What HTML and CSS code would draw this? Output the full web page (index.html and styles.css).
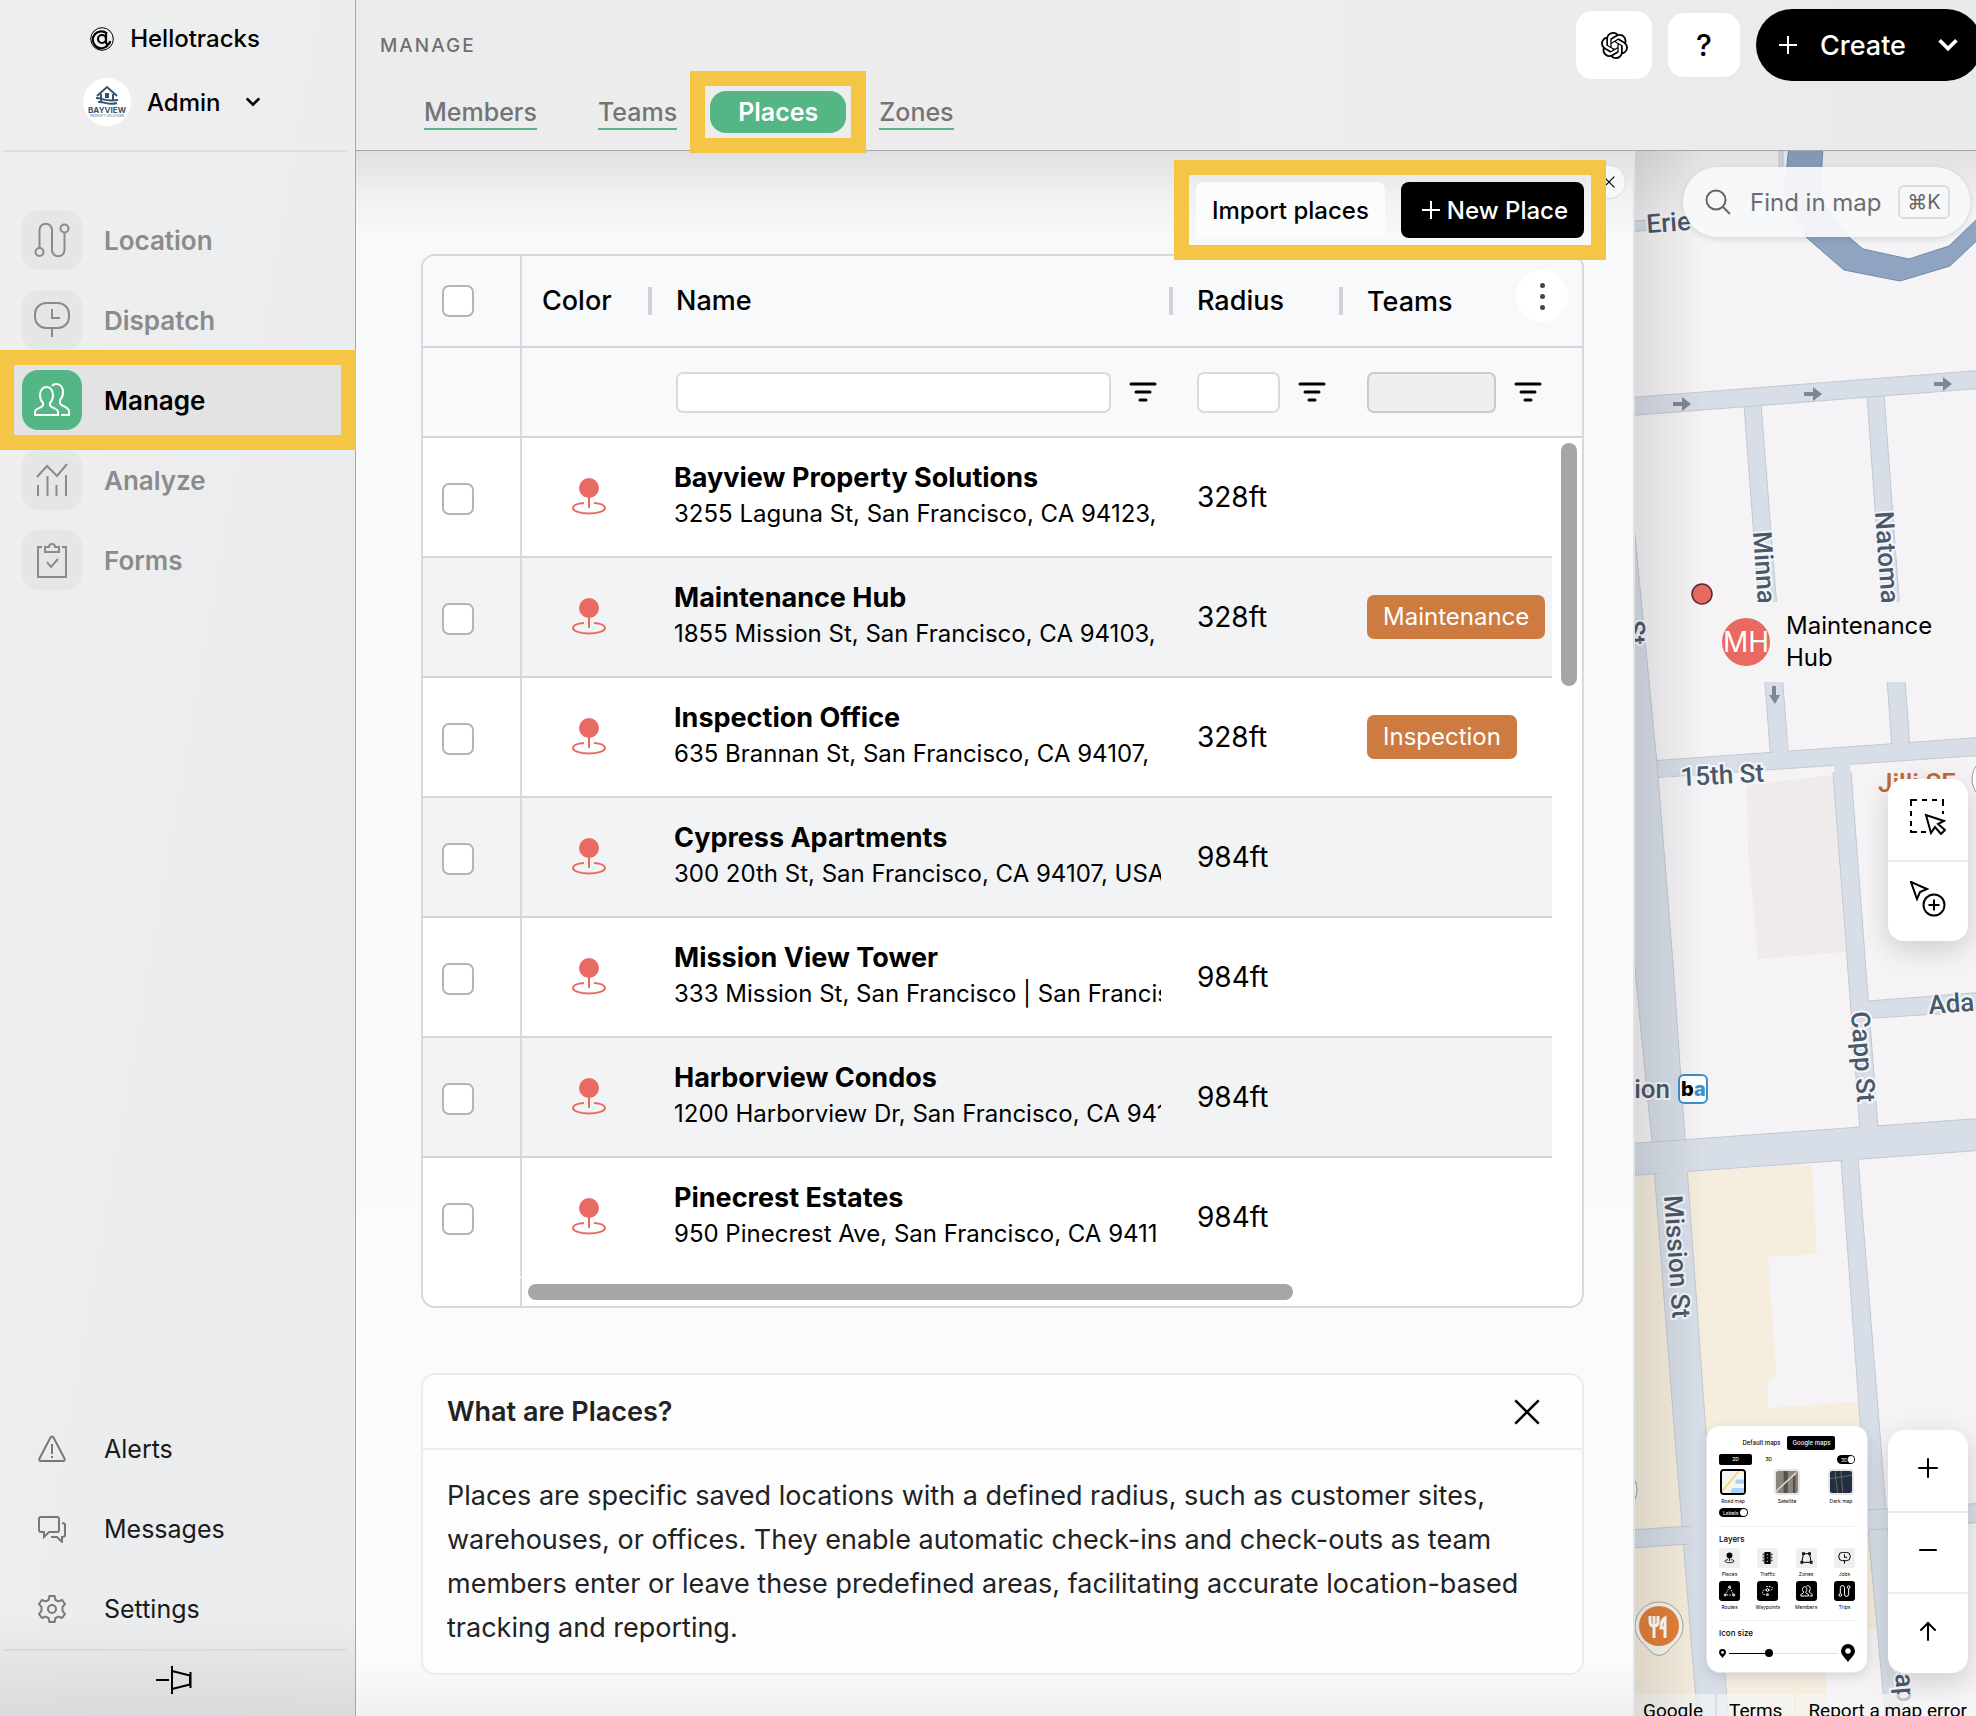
FILE: index.html
```html
<!DOCTYPE html>
<html lang="en">
<head>
    <meta charset="UTF-8">
    <meta name="viewport" content="width=device-width, initial-scale=1.0">
    <title>Places - Hellotracks</title>
    <link rel="stylesheet" href="styles.css">
</head>
<body>
    <!-- shared icons -->
    <svg class="sprite" aria-hidden="true">
        <symbol id="i-trips" viewBox="0 0 36 36">
            <path d="M5.5 26V8a6.25 6.25 0 0 1 12.5 0v20a6.25 6.25 0 0 0 12.5 0V11"/>
            <circle cx="5.5" cy="30" r="4"/><circle cx="30.5" cy="6.5" r="4"/>
        </symbol>
        <symbol id="i-dispatch" viewBox="0 0 36 36">
            <rect x="1" y="1" width="34" height="25" rx="11"/><path d="M18 7v9h8M18 26v9"/>
        </symbol>
        <symbol id="i-members" viewBox="0 0 36 36">
            <path d="M1 33v-3c0-4 8-4 8-7v-2c-2-2-3-5-3-8 0-5 3-8 6.500-8s6.500 3 6.500 8c0 3-1 6-3 8v2c0 3 8 3 8 7v3z"/>
            <path d="M18 4c1-1.500 3-2 4.500-2 4 0 6.500 3.500 6.500 8 0 3-1 6-3 8v3c0 3 9 4 9 8v4h-8"/>
        </symbol>
        <symbol id="i-place" viewBox="0 0 36 42">
            <circle cx="18" cy="12" r="10" fill="currentColor" stroke="none"/>
            <path d="M18 20v12M13 27C6 27.500 2 29.500 2 32c0 3 7 5.500 16 5.500S34 35 34 32c0-2.500-4-4.500-11-5"/>
        </symbol>
        <symbol id="i-filter" viewBox="0 0 28 22">
            <path d="M2 3h24M7 11h14M11 19h6"/>
        </symbol>
        <symbol id="i-chevron" viewBox="0 0 20 20">
            <path d="M3 6l7 7 7-7"/>
        </symbol>
        <symbol id="i-plus" viewBox="0 0 20 20">
            <path d="M10 1v18M1 10h18"/>
        </symbol>
        <symbol id="i-close" viewBox="0 0 20 20">
            <path d="M1 1l18 18M19 1L1 19"/>
        </symbol>
        <symbol id="i-marker" viewBox="0 0 20 26">
            <path fill="currentColor" stroke="none" fill-rule="evenodd" d="M10 0a10 10 0 0 1 10 10c0 6-6 10-10 16C6 20 0 16 0 10A10 10 0 0 1 10 0zm0 6a4 4 0 1 0 0 8 4 4 0 0 0 0-8z"/>
        </symbol>
    </svg>

    <div class="app">
        <aside class="sidebar">
            <div class="brand">
                <svg class="brand-logo" viewBox="0 0 24 24">
                    <circle cx="12" cy="12" r="11.300" stroke-width="1"/>
                    <circle cx="12" cy="12" r="4" stroke-width="2"/>
                    <path d="M16 5v10c0 3 4 3 4-1M17 6.500A8.500 8.500 0 1 0 18 18" stroke-width="2.200"/>
                </svg>
                <span>Hellotracks</span>
            </div>
            <button class="account" type="button">
                <svg class="avatar" viewBox="0 0 48 48">
                    <circle cx="24" cy="24" r="24" fill="#fff"/>
                    <path d="M14 18L24 9l10 9M18 16v7M30 16v7M13 20c7 0 8 4 22 2M15 24c7-1 9 4 19 1" fill="none" stroke="#35546e" stroke-width="2"/>
                    <path d="M22 15h4v5h-4z" fill="#35546e"/>
                    <text x="24" y="35" text-anchor="middle" class="avatar-name">BAYVIEW</text>
                    <text x="24" y="39" text-anchor="middle" class="avatar-sub">PROPERTY SOLUTIONS</text>
                </svg>
                <span>Admin</span>
                <svg class="icon chevron-sm"><use href="#i-chevron"/></svg>
            </button>

            <nav class="nav">
                <a href="#" class="nav-item"><span class="nav-icon"><svg class="icon"><use href="#i-trips"/></svg></span>Location</a>
                <a href="#" class="nav-item"><span class="nav-icon"><svg class="icon"><use href="#i-dispatch"/></svg></span>Dispatch</a>
                <a href="#" class="nav-item active highlight"><span class="nav-icon"><svg class="icon"><use href="#i-members"/></svg></span>Manage</a>
                <a href="#" class="nav-item"><span class="nav-icon"><svg class="icon" viewBox="0 0 36 36"><path d="M4 23v11M13.500 14v20M22.500 23v11M32 13v21M3 15L13 4l10 10L33 2"/></svg></span>Analyze</a>
                <a href="#" class="nav-item"><span class="nav-icon"><svg class="icon" viewBox="0 0 36 36"><path d="M8 5H4v30h28V5h-4M11 10V5h4c0-4 6-4 6 0h4v5zM13 20l4 5 7-8"/></svg></span>Forms</a>
            </nav>

            <nav class="nav nav-bottom">
                <a href="#" class="nav-item"><span class="nav-icon"><svg class="icon" viewBox="0 0 28 28"><path d="M12.500 2.500c.7-1.300 2.300-1.300 3 0l11 21c.6 1.200 0 2.500-1.500 2.500H3c-1.500 0-2.100-1.300-1.500-2.500zM14 9v10M14 21v2"/></svg></span>Alerts</a>
                <a href="#" class="nav-item"><span class="nav-icon"><svg class="icon" viewBox="0 0 28 28"><path d="M3 2h16c1 0 2 1 2 2v11c0 1-1 2-2 2h-8l-5 5v-5H3c-1 0-2-1-2-2V4c0-1 1-2 2-2zM24 8c2 0 3 1 3 2v10c0 1-1 2-3 2v5l-5-5h-6"/></svg></span>Messages</a>
                <a href="#" class="nav-item"><span class="nav-icon"><svg class="icon" viewBox="0 0 28 28"><circle cx="14" cy="14" r="4"/><path d="M11.500 1h5l1 4 3 1.500 3.500-1.500 3 4-2.500 3v4l2.500 3-3 4-3.500-1.500-3 1.500-1 4h-5l-1-4-3-1.500L4 23l-3-4 2.500-3v-4L1 9l3-4 3.500 1.500 3-1.500z"/></svg></span>Settings</a>
            </nav>
            <button class="collapse" type="button" aria-label="Pin sidebar">
                <svg class="icon" viewBox="0 0 36 30"><path d="M0 15h13M16 1v28M16 6l18 4.500v9L16 24M34.500 7v16"/></svg>
            </button>
        </aside>

        <div class="main">
            <header class="header">
                <div class="header-left">
                    <h1>MANAGE</h1>
                    <nav class="tabs">
                        <a href="#" class="tab"><span>Members</span></a>
                        <a href="#" class="tab"><span>Teams</span></a>
                        <div class="highlight"><a href="#" class="tab active"><span>Places</span></a></div>
                        <a href="#" class="tab"><span>Zones</span></a>
                    </nav>
                </div>
                <div class="header-actions">
                    <button class="btn-gpt" type="button" aria-label="Assistant">
                        <svg viewBox="0 0 24 24"><path d="M22.2819 9.8211a5.9847 5.9847 0 0 0-.5157-4.9108 6.0462 6.0462 0 0 0-6.5098-2.9A6.0651 6.0651 0 0 0 4.9807 4.1818a5.9847 5.9847 0 0 0-3.9977 2.9 6.0462 6.0462 0 0 0 .7427 7.0966 5.98 5.98 0 0 0 .511 4.9107 6.051 6.051 0 0 0 6.5146 2.9001A5.9847 5.9847 0 0 0 13.2599 24a6.0557 6.0557 0 0 0 5.7718-4.2058 5.9894 5.9894 0 0 0 3.9977-2.9001 6.0557 6.0557 0 0 0-.7475-7.0729zm-9.022 12.6081a4.4755 4.4755 0 0 1-2.8764-1.0408l.1419-.0804 4.7783-2.7582a.7948.7948 0 0 0 .3927-.6813v-6.7369l2.02 1.1686a.071.071 0 0 1 .038.052v5.5826a4.504 4.504 0 0 1-4.4945 4.4944zm-9.6607-4.1254a4.4708 4.4708 0 0 1-.5346-3.0137l.142.0852 4.783 2.7582a.7712.7712 0 0 0 .7806 0l5.8428-3.3685v2.3324a.0804.0804 0 0 1-.0332.0615L9.74 19.9502a4.4992 4.4992 0 0 1-6.1408-1.6464zM2.3408 7.8956a4.485 4.485 0 0 1 2.3655-1.9728V11.6a.7664.7664 0 0 0 .3879.6765l5.8144 3.3543-2.0201 1.1685a.0757.0757 0 0 1-.071 0l-4.8303-2.7865A4.504 4.504 0 0 1 2.3408 7.872zm16.5963 3.8558L13.1038 8.364 15.1192 7.2a.0757.0757 0 0 1 .071 0l4.8303 2.7913a4.4944 4.4944 0 0 1-.6765 8.1042v-5.6772a.79.79 0 0 0-.407-.667zm2.0107-3.0231l-.142-.0852-4.7735-2.7818a.7759.7759 0 0 0-.7854 0L9.409 9.2297V6.8974a.0662.0662 0 0 1 .0284-.0615l4.8303-2.7866a4.4992 4.4992 0 0 1 6.6802 4.66zM8.3065 12.863l-2.02-1.1638a.0804.0804 0 0 1-.038-.0567V6.0742a4.4992 4.4992 0 0 1 7.3757-3.4537l-.142.0805L8.704 5.459a.7948.7948 0 0 0-.3927.6813zm1.0976-2.3654l2.602-1.4998 2.6069 1.4998v2.9994l-2.5974 1.4997-2.6067-1.4997Z"/></svg>
                    </button>
                    <button class="btn-help" type="button">?</button>
                    <button class="btn-create" type="button">
                        <svg class="icon"><use href="#i-plus"/></svg>
                        <span>Create</span>
                        <svg class="icon create-chevron"><use href="#i-chevron"/></svg>
                    </button>
                </div>
            </header>

            <div class="content">
                <section class="panel">
                    <button class="panel-close" type="button" aria-label="Close panel"><svg class="icon"><use href="#i-close"/></svg></button>
                    <div class="toolbar">
                        <div class="toolbar-buttons highlight">
                            <button class="btn-import" type="button">Import places</button>
                            <button class="btn-new" type="button"><svg class="icon"><use href="#i-plus"/></svg>New Place</button>
                        </div>
                    </div>

                    <div class="grid">
                        <table>
                            <colgroup>
                                <col class="col-check"><col class="col-color"><col><col class="col-radius"><col class="col-teams"><col class="col-end">
                            </colgroup>
                            <thead>
                                <tr class="titles">
                                    <th class="pinned"><input type="checkbox" aria-label="Select all"></th>
                                    <th class="sep"><div>Color</div></th>
                                    <th class="sep"><div>Name</div></th>
                                    <th class="sep"><div>Radius</div></th>
                                    <th><div>Teams</div></th>
                                    <th></th>
                                </tr>
                                <tr class="filters">
                                    <td class="pinned"></td>
                                    <td></td>
                                    <td><div class="filter filter-name"><input type="text" aria-label="Filter by name"><button type="button" aria-label="Name filter menu"><svg class="icon"><use href="#i-filter"/></svg></button></div></td>
                                    <td><div class="filter"><input type="text" aria-label="Filter by radius"><button type="button" aria-label="Radius filter menu"><svg class="icon"><use href="#i-filter"/></svg></button></div></td>
                                    <td><div class="filter filter-teams"><input type="text" aria-label="Filter by teams" disabled><button type="button" aria-label="Teams filter menu"><svg class="icon"><use href="#i-filter"/></svg></button></div></td>
                                    <td></td>
                                </tr>
                            </thead>
                            <tbody>
                                <tr>
                                    <td class="pinned"><input type="checkbox" aria-label="Select Bayview Property Solutions"></td>
                                    <td class="color"><svg class="icon"><use href="#i-place"/></svg></td>
                                    <td class="name"><strong>Bayview Property Solutions</strong><p>3255 Laguna St, San Francisco, CA 94123,</p></td>
                                    <td class="radius">328ft</td>
                                    <td></td>
                                    <td class="end"></td>
                                </tr>
                                <tr>
                                    <td class="pinned"><input type="checkbox" aria-label="Select Maintenance Hub"></td>
                                    <td class="color"><svg class="icon"><use href="#i-place"/></svg></td>
                                    <td class="name"><strong>Maintenance Hub</strong><p>1855 Mission St, San Francisco, CA 94103,</p></td>
                                    <td class="radius">328ft</td>
                                    <td><span class="badge">Maintenance</span></td>
                                    <td class="end"></td>
                                </tr>
                                <tr>
                                    <td class="pinned"><input type="checkbox" aria-label="Select Inspection Office"></td>
                                    <td class="color"><svg class="icon"><use href="#i-place"/></svg></td>
                                    <td class="name"><strong>Inspection Office</strong><p>635 Brannan St, San Francisco, CA 94107,</p></td>
                                    <td class="radius">328ft</td>
                                    <td><span class="badge">Inspection</span></td>
                                    <td class="end"></td>
                                </tr>
                                <tr>
                                    <td class="pinned"><input type="checkbox" aria-label="Select Cypress Apartments"></td>
                                    <td class="color"><svg class="icon"><use href="#i-place"/></svg></td>
                                    <td class="name"><strong>Cypress Apartments</strong><p>300 20th St, San Francisco, CA 94107, USA</p></td>
                                    <td class="radius">984ft</td>
                                    <td></td>
                                    <td class="end"></td>
                                </tr>
                                <tr>
                                    <td class="pinned"><input type="checkbox" aria-label="Select Mission View Tower"></td>
                                    <td class="color"><svg class="icon"><use href="#i-place"/></svg></td>
                                    <td class="name"><strong>Mission View Tower</strong><p>333 Mission St, San Francisco | San Francis</p></td>
                                    <td class="radius">984ft</td>
                                    <td></td>
                                    <td class="end"></td>
                                </tr>
                                <tr>
                                    <td class="pinned"><input type="checkbox" aria-label="Select Harborview Condos"></td>
                                    <td class="color"><svg class="icon"><use href="#i-place"/></svg></td>
                                    <td class="name"><strong>Harborview Condos</strong><p>1200 Harborview Dr, San Francisco, CA 941</p></td>
                                    <td class="radius">984ft</td>
                                    <td></td>
                                    <td class="end"></td>
                                </tr>
                                <tr>
                                    <td class="pinned"><input type="checkbox" aria-label="Select Pinecrest Estates"></td>
                                    <td class="color"><svg class="icon"><use href="#i-place"/></svg></td>
                                    <td class="name"><strong>Pinecrest Estates</strong><p>950 Pinecrest Ave, San Francisco, CA 9411</p></td>
                                    <td class="radius">984ft</td>
                                    <td></td>
                                    <td class="end"></td>
                                </tr>
                            </tbody>
                        </table>
                        <div class="hscroll"><div class="hscroll-pinned"></div><div class="hscroll-thumb"></div></div>
                        <div class="vscroll-thumb"></div>
                        <button class="grid-menu" type="button" aria-label="Table menu"><i></i><i></i><i></i></button>
                    </div>

                    <article class="info">
                        <div class="info-head">
                            <h2>What are Places?</h2>
                            <button type="button" aria-label="Dismiss"><svg class="icon"><use href="#i-close"/></svg></button>
                        </div>
                        <p>Places are specific saved locations with a defined radius, such as customer sites, warehouses, or offices. They enable automatic check-ins and check-outs as team members enter or leave these predefined areas, facilitating accurate location-based tracking and reporting.</p>
                    </article>
                </section>

                <section class="map">
                    <svg class="map-canvas" viewBox="1635 151 341 1565" preserveAspectRatio="xMinYMin slice">
                        <!-- blocks -->
                        <g fill="#efebea">
                            <path d="M1747 785l86-10 12 177-87 7-10-109z"/>
                        </g>
                        <g fill="#f5eddd">
                            <path d="M1635 1175h21l50 541h-71z"/>
                            <path d="M1687 1172l125-8 5 90-49 3 8 113-2 10h-7l1 28 91-6 12 126 20 100-63 5-2 85h-105z"/>
                        </g>
                        <!-- streets -->
                        <g fill="#d7dee7" stroke="#c3c9d0">
                            <path d="M1779 145h4v25h-4zM1630 221l20-1v10l-20 2z"/>
                            <path d="M1744 405l17-1 28 358-18 1zM1867 395l17-1 26 354-18 1z"/>
                            <path d="M1833 773l18-1 27 356-18 2zM1841 1160l17-1 28 350 18 215h-18l-18-195z"/>
                            <path d="M1868 1001l118-9v19l-113 7zM1860 1529v0l8-19 118-7v19l-116 8z"/>
                            <path d="M1625 398l361-28v18l-361 28z"/>
                            <path d="M1650 761l336-24v18l-336 23z"/>
                            <path d="M1630 484l27 280 16 199 13 190 19 267 24 306h-31l-26-326-20-258-18-182-14-60z"/>
                            <path d="M1625 1144l361-26v32l-361 26z"/>
                            <path d="M1630 1530l60-4v18l-60 4z"/>
                        </g>
                        <g fill="#d7dee7">
                            <path d="M1773 740l15-1 1 24-15 1zM1893 735l15-1 1 20-15 1zM1834 765l16-1v20h-15zM1659 762l12-1v16l-10 1zM1656 1144l30-2 2 30-30 2zM1860 1118l17-1v20h-16zM1842 1145h16v22h-15zM1857 1002h14l1 16h-13zM1681 1528h18l2 15h-18z"/>
                        </g>
                        <path d="M1789 145l-5 50 23 43 37 32 56 11 50-15 36-34v-44l-7 29-30 29-40 13-46-10-13-11-30-38 3-55z" fill="#8ea4c0" stroke="#7089ab"/>
                        <!-- one-way arrows -->
                        <g fill="#7e8795">
                            <path id="arrow" d="M1673 402h9v-5l9 7-9 7v-5h-9z"/>
                            <use href="#arrow" x="131" y="-10"/><use href="#arrow" x="261" y="-20"/>
                            <path d="M1772 686h4v9h4l-5 9-6-9h3z"/>
                        </g>
                        <g class="street">
                            <text transform="translate(1647 233) rotate(-4)">Erie</text>
                            <text transform="translate(1753 532) rotate(86)">Minna</text>
                            <text transform="translate(1875 512) rotate(86)">Natoma</text>
                            <text transform="translate(1681 786) rotate(-3)">15th St</text>
                            <text transform="translate(1929 1014) rotate(-4)">Ada</text>
                            <text transform="translate(1851 1012) rotate(86)">Capp St</text>
                            <text transform="translate(1664 1196) rotate(86)">Mission St</text>
                            <text transform="translate(1894 1657) rotate(86)">Cap</text>
                            <text transform="translate(1626 621) rotate(86)">St</text>
                            <text x="1670" y="1098" text-anchor="end">ion</text>
                        </g>
                        <text x="1878" y="792" class="poi">Jilli SF</text>
                        <circle cx="1995" cy="779" r="23" fill="#fff" stroke="#999"/>
                        <circle cx="1995" cy="779" r="19" fill="#e3802f"/>
                        <circle cx="1614" cy="1490" r="23" fill="#fff" stroke="#999"/>
                        <!-- transit stop -->
                        <rect x="1679" y="1075" width="28" height="28" rx="5" fill="#fff" stroke="#3d8fc8" stroke-width="2"/>
                        <text x="1681" y="1096" class="stop">b<tspan fill="#3d8fc8">a</tspan></text>
                        <!-- restaurant -->
                        <path d="M1659 1602a24 24 0 0 1 24 24c0 13-9 17-15 25q-9 9-18 0c-6-8-15-12-15-25a24 24 0 0 1 24-24z" fill="#f8f6f2" stroke="#aaa49a"/>
                        <circle cx="1659" cy="1626" r="20" fill="#e3803a"/>
                        <path d="M1650 1616v6q0 4 4 4t4-4v-6M1654 1616v22M1665 1638v-20q-4 2-4 10h4" fill="none" stroke="#fff" stroke-width="3"/>
                        <circle cx="1702" cy="594" r="10" fill="#e86a62" stroke="#5b2b2b" stroke-width="1.500"/>
                    </svg>

                    <div class="place-label"><span class="place-avatar">MH</span><span>Maintenance Hub</span></div>

                    <label class="search">
                        <svg class="icon" viewBox="0 0 26 26"><circle cx="11" cy="11" r="9.500"/><path d="M18 18l7 7"/></svg>
                        <input type="text" placeholder="Find in map" aria-label="Find in map">
                        <kbd>⌘K</kbd>
                    </label>

                    <div class="controls select-tools">
                        <button type="button" aria-label="Select area"><svg class="icon" viewBox="0 0 36 36"><path d="M1 7V1h6M12 1h5M22 1h5M32 1h1v6M1 12v5M1 22v5M1 31v2h6M11 33h5M33 12v3"/><path d="M16 16l5 18 4-6 6 7 4-4-7-6 6-3z"/></svg></button>
                        <button type="button" aria-label="Add point"><svg class="icon" viewBox="0 0 36 36"><path d="M1 1l16 7-7 3-3 7zM24 18.500v11M18.500 24h11"/><circle cx="24" cy="24" r="10.500"/></svg></button>
                    </div>

                    <div class="layers">
                        <div class="seg seg-provider"><button type="button">Default maps</button><button type="button" class="on">Google maps</button></div>
                        <div class="layers-row">
                            <div class="seg seg-dim"><button type="button" class="on">2D</button><button type="button">3D</button></div>
                            <label class="toggle"><span>3D</span><input type="checkbox" checked></label>
                        </div>
                        <div class="layers-row styles">
                            <button type="button" class="on"><svg viewBox="0 0 26 26"><path fill="#f6f5f1" d="M0 0h26v26H0z"/><path fill="#a9d3f7" d="M16 10h10v5H16zM12 20h14v6H10z"/><path d="M0 24L20 0" stroke="#f2d470" stroke-width="2"/></svg>Road map</button>
                            <button type="button"><svg viewBox="0 0 26 26"><path fill="#8c857e" d="M0 0h26v26H0z"/><path fill="#55524f" d="M9 0h5v26H9zM20 6h3v20h-3z"/><path d="M0 24L24 2" stroke="#d8d4cf" stroke-width="2"/></svg>Satellite</button>
                            <button type="button"><svg viewBox="0 0 26 26"><path fill="#222e42" d="M0 0h26v26H0z"/><path d="M6 0l3 26M13 0l2 26M0 9l26-4" stroke="#7b705f"/></svg>Dark map</button>
                        </div>
                        <label class="toggle toggle-labels"><span>Labels</span><input type="checkbox" checked></label>
                        <hr>
                        <h3>Layers</h3>
                        <div class="layer-grid">
                            <button type="button"><svg class="icon"><use href="#i-place"/></svg>Places</button>
                            <button type="button"><svg class="icon" viewBox="0 0 36 36"><path fill="currentColor" fill-rule="evenodd" d="M10 1h16v34H10zm8 4a3 3 0 1 0 0 6 3 3 0 0 0 0-6zm0 10a3 3 0 1 0 0 6 3 3 0 0 0 0-6zm0 10a3 3 0 1 0 0 6 3 3 0 0 0 0-6z"/><path d="M5 5v26M31 5v26" stroke-dasharray="5 4"/></svg>Traffic</button>
                            <button type="button"><svg class="icon" viewBox="0 0 36 36"><path d="M9 5h18l5 26H4zM6 2h6v6H6zM24 2h6v6h-6zM1 28h6v6H1zM29 28h6v6h-6z"/></svg>Zones</button>
                            <button type="button"><svg class="icon"><use href="#i-dispatch"/></svg>Jobs</button>
                            <button type="button" class="on"><svg class="icon" viewBox="0 0 36 36"><path d="M18 5L6 30h24z" stroke-dasharray="4 4"/><circle cx="18" cy="6" r="3"/><circle cx="5" cy="30" r="3"/><circle cx="31" cy="30" r="3"/></svg>Routes</button>
                            <button type="button" class="on"><svg class="icon" viewBox="0 0 36 36"><path d="M14 5h14c6 0 6 10 0 10H9c-8 0-8 14 0 14h10" stroke-dasharray="5 3"/><circle cx="18" cy="15" r="4"/><circle cx="18" cy="29" r="3"/></svg>Waypoints</button>
                            <button type="button" class="on"><svg class="icon"><use href="#i-members"/></svg>Members</button>
                            <button type="button" class="on"><svg class="icon"><use href="#i-trips"/></svg>Trips</button>
                        </div>
                        <hr>
                        <h3>Icon size</h3>
                        <div class="layers-row size">
                            <svg class="marker-sm"><use href="#i-marker"/></svg>
                            <input type="range" min="0" max="100" value="36" aria-label="Icon size">
                            <svg class="marker-lg"><use href="#i-marker"/></svg>
                        </div>
                    </div>

                    <div class="controls zoom">
                        <button type="button" aria-label="Zoom in"><svg class="icon"><use href="#i-plus"/></svg></button>
                        <button type="button" aria-label="Zoom out"><svg class="icon" viewBox="0 0 20 20"><path d="M2 10h16"/></svg></button>
                        <button type="button" aria-label="Reset north"><svg class="icon" viewBox="0 0 20 20"><path d="M10 19V2M3 9l7-7 7 7"/></svg></button>
                    </div>

                    <div class="credits"><span>Google</span><a href="#">Terms</a><a href="#">Report a map error</a></div>
                </section>
            </div>
        </div>
    </div>
</body>
</html>
```
FILE: styles.css
```css
* {
    box-sizing: border-box;
}

body {
    margin: 0;
    font-family: Inter, "Liberation Sans", sans-serif;
    font-size: 26px;
    color: #000;
    background: #ececed;
}

h1, h2, h3, p {
    margin: 0;
}

a {
    color: inherit;
    text-decoration: none;
}

button {
    font: inherit;
    color: inherit;
    background: none;
    border: none;
    padding: 0;
    cursor: pointer;
}

.sprite {
    position: absolute;
    width: 0;
    height: 0;
}

.icon {
    display: block;
    flex: none;
    fill: none;
    stroke: currentColor;
    stroke-width: 2;
}

/* yellow tutorial frame */
.highlight {
    position: relative;
    z-index: 2;
    outline: 15px solid #f5c645;
}

.app {
    display: flex;
    height: 100vh;
    overflow: hidden;
}

/* sidebar */
.sidebar {
    flex: 0 0 356px;
    display: flex;
    flex-direction: column;
    border-right: 1px solid #a5a6a9;
    background: linear-gradient(to top, rgba(0,0,0,0.08), transparent 100px), linear-gradient(100deg, #efefef, #ebecee 70%, #ededed);
}

.brand {
    display: flex;
    align-items: center;
    justify-content: center;
    gap: 16px;
    padding: 23px 5px 0 0;
    line-height: 32px;
    font-size: 24px;
    font-weight: 500;
}

.brand-logo {
    width: 24px;
    height: 24px;
    fill: none;
    stroke: #000;
}

.account {
    display: flex;
    align-items: center;
    gap: 16px;
    margin: 23px 8px 0 4px;
    padding: 0 0 24px 79px;
    border-bottom: 2px solid #dcdddd;
    font-size: 24px;
    font-weight: 500;
}

.avatar {
    width: 48px;
    height: 48px;
}

.avatar-name {
    font-size: 8px;
    font-weight: 700;
    fill: #35546e;
}

.avatar-sub {
    font-size: 3px;
    fill: #6d7c88;
}

.chevron-sm {
    width: 18px;
    height: 18px;
    margin-left: 8px;
    stroke-width: 3;
}

.nav {
    display: flex;
    flex-direction: column;
    gap: 10px;
    padding: 53px 14px 0;
    color: #8a8b8c;
    font-weight: 600;
}

.nav-item {
    display: flex;
    align-items: center;
    gap: 22px;
    height: 70px;
    padding-left: 8px;
}

.nav-item.active {
    color: #000;
    background: #e3e3e4;
}

.nav-icon {
    display: flex;
    align-items: center;
    justify-content: center;
    width: 60px;
    height: 60px;
    border-radius: 16px;
    background: #e5e6e6;
}

.nav-icon .icon {
    width: 36px;
    height: 36px;
}

.nav-item.active .nav-icon {
    background: #55b685;
    color: #fff;
}

.nav-bottom {
    margin: auto 8px 0 4px;
    padding: 0 10px 5px;
    border-bottom: 2px solid #d9dadb;
    color: #1a1a1a;
    font-size: 25px;
    font-weight: 400;
}

.nav-bottom .nav-icon {
    background: none;
    color: #77787a;
}

.nav-bottom .icon {
    width: 28px;
    height: 28px;
}

.collapse {
    display: flex;
    justify-content: center;
    padding: 14px 8px 21px 0;
}

.collapse .icon {
    width: 36px;
    height: 30px;
}

/* header */
.main {
    flex: 1;
    min-width: 0;
    display: flex;
    flex-direction: column;
}

.header {
    display: flex;
    justify-content: space-between;
    height: 151px;
    border-bottom: 1px solid #a5a6a9;
    background: linear-gradient(90deg, #ececed, #ededed 60%, #e8eaec);
}

.header-left {
    padding: 34px 0 0 24px;
}

.header h1 {
    font-size: 19px;
    line-height: 24px;
    font-weight: 500;
    letter-spacing: 2px;
    color: #6f7073;
}

.tabs {
    display: flex;
    gap: 5px;
    margin: 33px 0 0 16px;
}

.tabs .highlight {
    outline-offset: 5px;
}

.tab {
    display: block;
    height: 42px;
    padding: 6px 28px;
    line-height: 31px;
    font-size: 25px;
    font-weight: 500;
    color: #737476;
}

.tab span {
    display: block;
    border-bottom: 2px solid #55b685;
}

.tab.active {
    border-radius: 16px;
    background: #55b685;
    color: #fff;
    font-weight: 600;
}

.header-actions {
    display: flex;
    align-items: center;
    gap: 16px;
    height: 72px;
    margin: 9px -6px 0 0;
}

.btn-gpt, .btn-help {
    display: flex;
    align-items: center;
    justify-content: center;
    width: 72px;
    height: 64px;
    border-radius: 16px;
    background: #fff;
    font-size: 30px;
    font-weight: 500;
}

.btn-gpt {
    width: 76px;
    height: 68px;
}

.btn-gpt svg {
    width: 27px;
    height: 27px;
}

.btn-create {
    display: flex;
    align-items: center;
    gap: 22px;
    height: 72px;
    width: 226px;
    padding-left: 22px;
    border-radius: 36px;
    background: #000;
    color: #fff;
    font-size: 27px;
    font-weight: 500;
}

.btn-create .icon {
    width: 20px;
    height: 20px;
}

.btn-create .create-chevron {
    width: 24px;
    height: 24px;
    margin-left: 8px;
    stroke-width: 3;
}

.content {
    flex: 1;
    min-height: 0;
    display: flex;
}

/* places panel */
.panel {
    position: relative;
    flex: 1;
    min-width: 0;
    padding: 31px 49px 0 65px;
    border-right: 2px solid #e1e2e4;
    background: linear-gradient(rgba(0,0,0,0.1), rgba(0,0,0,0.03) 45px, transparent 90px), linear-gradient(to top, rgba(0,0,0,0.05), transparent 60px), linear-gradient(#f7f9fb, #f9fafb 60%, #fcfcfb);
}

.panel-close {
    position: absolute;
    top: 14px;
    right: 7px;
    display: flex;
    align-items: center;
    justify-content: center;
    width: 34px;
    height: 34px;
    border: 1px solid #dcdddd;
    border-radius: 50%;
    background: #f7f8f8;
}

.panel-close .icon {
    width: 12px;
    height: 12px;
}

.toolbar {
    display: flex;
    justify-content: flex-end;
    margin-bottom: 16px;
}

.toolbar-buttons {
    display: flex;
    gap: 16px;
    outline-offset: 7px;
    font-size: 24px;
    font-weight: 500;
}

.btn-import, .btn-new {
    display: flex;
    align-items: center;
    justify-content: center;
    gap: 6px;
    height: 56px;
    padding: 0 16px;
    border-radius: 8px;
    background: #fcfcfd;
}

.btn-new {
    padding: 0 16px 0 20px;
    background: #000;
    color: #fff;
}

.btn-new .icon {
    width: 20px;
    height: 20px;
}

.grid {
    position: relative;
    border: 2px solid #d7d9dc;
    border-radius: 14px;
    background: #fff;
    overflow: hidden;
}

table {
    width: 100%;
    table-layout: fixed;
    border-spacing: 0;
}

.col-check { width: 99px; }
.col-color { width: 130px; }
.col-radius { width: 170px; }
.col-teams { width: 209px; }
.col-end { width: 30px; }

th, td {
    padding: 0 0 0 24px;
    text-align: left;
    border-bottom: 2px solid #d4d6d9;
}

thead th, thead td {
    background: #f8f9fb;
}

.titles th {
    height: 92px;
    font-size: 27px;
    font-weight: 500;
}

.titles th:nth-child(2) {
    padding-left: 20px;
}

.sep div {
    border-right: 4px solid #d0d2d5;
    line-height: 28px;
}

.filters td {
    height: 90px;
}

th.pinned, td.pinned {
    padding: 0 0 0 19px;
    border-right: 2px solid #d7d9dc;
}

input[type="checkbox"] {
    appearance: none;
    display: block;
    width: 32px;
    height: 32px;
    margin: 0;
    border: 2px solid #b4b5b7;
    border-radius: 7px;
    background: #fff;
}

.filter {
    display: flex;
    align-items: center;
    gap: 18px;
}

.filter input {
    width: 83px;
    height: 41px;
    border: 2px solid #d9dadc;
    border-radius: 7px;
    background: #fff;
    font: inherit;
}

.filter-name {
    padding-right: 16px;
}

.filter-name input {
    flex: 1;
    min-width: 0;
}

.filter-teams input {
    width: 129px;
    background: #efefef;
    border-color: #c9cacc;
}

.filter .icon {
    width: 28px;
    height: 22px;
    stroke-width: 3;
    stroke-linecap: round;
}

tbody td {
    height: 120px;
}

tbody td.pinned {
    padding-top: 4px;
}

tbody tr:nth-child(even) td {
    background: #f2f3f5;
}

tbody tr td.end {
    background: #fff;
    border-bottom-color: #fff;
}

tbody tr:last-child td {
    border-bottom-color: #fff;
}

.color .icon {
    width: 36px;
    height: 42px;
    margin-left: 25px;
    color: #e86a62;
}

.radius {
    font-size: 28px;
}

.name {
    padding: 0 12px 2px 22px;
}

.name strong {
    display: block;
    line-height: 36px;
    font-size: 27px;
    font-weight: 700;
}

.name p {
    line-height: 36px;
    font-size: 24px;
    white-space: nowrap;
    overflow: hidden;
}

.badge {
    display: inline-block;
    padding: 0 16px;
    line-height: 44px;
    border-radius: 7px;
    background: #cd7b40;
    color: #fff;
    font-size: 24px;
}

.hscroll {
    display: flex;
    height: 28px;
}

.hscroll-pinned {
    width: 99px;
    margin-right: 6px;
    border-right: 2px solid #d7d9dc;
}

.hscroll-thumb {
    width: 66%;
    height: 16px;
    margin-top: 6px;
    border-radius: 8px;
    background: #a6a6a6;
}

.vscroll-thumb {
    position: absolute;
    top: 187px;
    right: 5px;
    width: 16px;
    height: 243px;
    border-radius: 8px;
    background: #a6a6a6;
}

.grid-menu {
    position: absolute;
    top: 14px;
    right: 14px;
    display: flex;
    flex-direction: column;
    align-items: center;
    justify-content: center;
    gap: 6px;
    width: 52px;
    height: 52px;
    border-radius: 50%;
    background: #fff;
}

.grid-menu i {
    width: 5px;
    height: 5px;
    border-radius: 50%;
    background: #444;
}

.info {
    margin-top: 65px;
    border: 2px solid #ebecee;
    border-radius: 14px;
    background: #fdfdfe;
    color: #222;
}

.info-head {
    display: flex;
    align-items: center;
    justify-content: space-between;
    height: 75px;
    padding: 0 42px 0 24px;
    border-bottom: 2px solid #ebecee;
}

.info h2 {
    font-size: 27px;
    font-weight: 600;
}

.info .icon {
    width: 26px;
    height: 26px;
    color: #000;
}

.info p {
    padding: 24px 24px 23px;
    font-size: 27px;
    line-height: 44px;
}

/* map */
.map {
    position: relative;
    flex: 0 0 341px;
    overflow: hidden;
    background: #f5f3f5;
}

.map::before {
    content: "";
    position: absolute;
    inset: 0;
    z-index: 1;
    background: linear-gradient(90deg, rgba(0,0,0,0.1), transparent 70px), linear-gradient(rgba(0,0,0,0.08), transparent 70px);
    pointer-events: none;
}

.map-canvas {
    display: block;
    width: 100%;
    height: 100%;
}

.street {
    font: 500 26px Roboto, sans-serif;
    fill: #4a586c;
    stroke: #f5f6f8;
    stroke-width: 4;
    paint-order: stroke;
}

.poi {
    font: 500 26px Roboto, sans-serif;
    fill: #c4682e;
}

.stop {
    font: 800 20px Inter, sans-serif;
}

.place-label {
    position: absolute;
    top: 451px;
    right: 0;
    display: flex;
    align-items: center;
    gap: 16px;
    width: 254px;
    height: 80px;
    font-size: 24px;
    line-height: 32px;
    background: #f5f4f5;
}

.place-label span:last-child {
    width: 160px;
}

.place-avatar {
    display: flex;
    align-items: center;
    justify-content: center;
    flex: none;
    width: 48px;
    height: 48px;
    border-radius: 50%;
    background: #e86a62;
    color: #fff;
    font-size: 28px;
    overflow: hidden;
}

.search {
    position: absolute;
    z-index: 2;
    top: 16px;
    right: 6px;
    display: flex;
    align-items: center;
    gap: 19px;
    width: 287px;
    height: 70px;
    padding: 0 20px 0 22px;
    border-radius: 35px;
    background: rgba(247,248,250,0.95);
    box-shadow: 0 2px 6px rgba(0,0,0,0.12);
    color: #666;
}

.search .icon {
    width: 26px;
    height: 26px;
}

.search input {
    flex: 1;
    min-width: 0;
    padding: 0;
    border: none;
    background: none;
    font: 24px Inter, sans-serif;
}

.search input::placeholder {
    color: #6c6d70;
}

kbd {
    margin-left: -6px;
    width: 52px;
    border: 2px solid #dcdddf;
    border-radius: 6px;
    font: 20px/30px Inter, "DejaVu Sans", sans-serif;
    text-align: center;
}

.controls {
    position: absolute;
    z-index: 2;
    right: 8px;
    display: flex;
    flex-direction: column;
    width: 80px;
    border-radius: 16px;
    background: #fff;
    box-shadow: 0 8px 28px rgba(0,0,0,0.16);
}

.controls button {
    display: flex;
    align-items: center;
    justify-content: center;
    height: 81px;
    padding-bottom: 6px;
}

.controls button + button {
    border-top: 2px solid #ececee;
}

.select-tools {
    top: 628px;
}

.select-tools .icon {
    width: 36px;
    height: 36px;
}

.zoom {
    bottom: 43px;
}

.zoom .icon {
    width: 20px;
    height: 20px;
    stroke-linecap: round;
}

.credits {
    position: absolute;
    left: 0;
    right: 0;
    bottom: 0;
    display: flex;
    gap: 2px;
    height: 22px;
    font: 19px/34px Roboto, sans-serif;
    white-space: nowrap;
    overflow: hidden;
}

.credits > * {
    padding: 0 12px;
    background: rgba(245,245,245,0.7);
}

.credits span {
    padding-left: 8px;
}

/* map layers popup */
.layers {
    position: absolute;
    z-index: 2;
    right: 108px;
    bottom: 43px;
    width: 162px;
    height: 248px;
    padding: 10px 12px;
    border: 1px solid #e7e8ea;
    border-radius: 14px;
    background: #fff;
    box-shadow: 0 4px 12px rgba(0,0,0,0.12);
    font-size: 5px;
    line-height: 8px;
}

.layers button {
    display: block;
}

.seg {
    display: flex;
    justify-content: center;
    font-weight: 500;
}

.seg-provider {
    gap: 7px;
    font-size: 6px;
    line-height: 14px;
    padding-left: 4px;
}

.seg-provider .on {
    width: 48px;
}

.seg .on {
    background: #000;
    color: #fff;
    border-radius: 2px;
}

.seg-dim {
    line-height: 11px;
}

.seg-dim button {
    width: 33px;
}

.layers-row {
    display: flex;
    justify-content: space-between;
    align-items: center;
    margin-top: 4px;
}

.toggle {
    display: flex;
    align-items: center;
    justify-content: space-between;
    width: 18px;
    height: 9px;
    padding: 1px 1px 1px 4px;
    border-radius: 5px;
    background: #000;
    color: #fff;
}

.toggle input[type="checkbox"] {
    width: 7px;
    height: 7px;
    border: none;
    border-radius: 50%;
}

.toggle-labels {
    width: 29px;
    margin-top: 3px;
}

.styles {
    padding: 0 1px;
}

.styles svg {
    display: block;
    width: 26px;
    height: 26px;
    margin: 0 auto 2px;
    border: 2px solid #e6e6e8;
    border-radius: 4px;
}

.styles .on svg {
    border-color: #000;
}

.layers hr {
    height: 1px;
    margin: 9px 0 8px;
    border: none;
    background: #f0f0f0;
}

.layers h3 {
    font-size: 8px;
    line-height: 8px;
    font-weight: 500;
}

.layer-grid {
    display: grid;
    grid-template-columns: repeat(4, 21px);
    justify-content: space-between;
    row-gap: 3px;
    margin-top: 5px;
}

.layer-grid button {
    display: flex;
    flex-direction: column;
    align-items: center;
    white-space: nowrap;
}

.layer-grid button .icon {
    width: 21px;
    height: 20px;
    margin-bottom: 2px;
    padding: 4px;
    border-radius: 3px;
    background: #eeeeef;
    stroke-width: 3;
}

.layer-grid .on .icon {
    background: #000;
    color: #fff;
}

.size {
    gap: 3px;
    margin-top: 7px;
}

.marker-sm {
    width: 7px;
    height: 9px;
}

.marker-lg {
    width: 14px;
    height: 18px;
}

.size input {
    appearance: none;
    flex: 1;
    min-width: 0;
    height: 8px;
    margin: 0;
    background: linear-gradient(90deg, #000 38%, #e2e2e2 38%) center / 100% 1px no-repeat;
}

.size input::-webkit-slider-thumb {
    appearance: none;
    width: 8px;
    height: 8px;
    border-radius: 50%;
    background: #000;
}
```
